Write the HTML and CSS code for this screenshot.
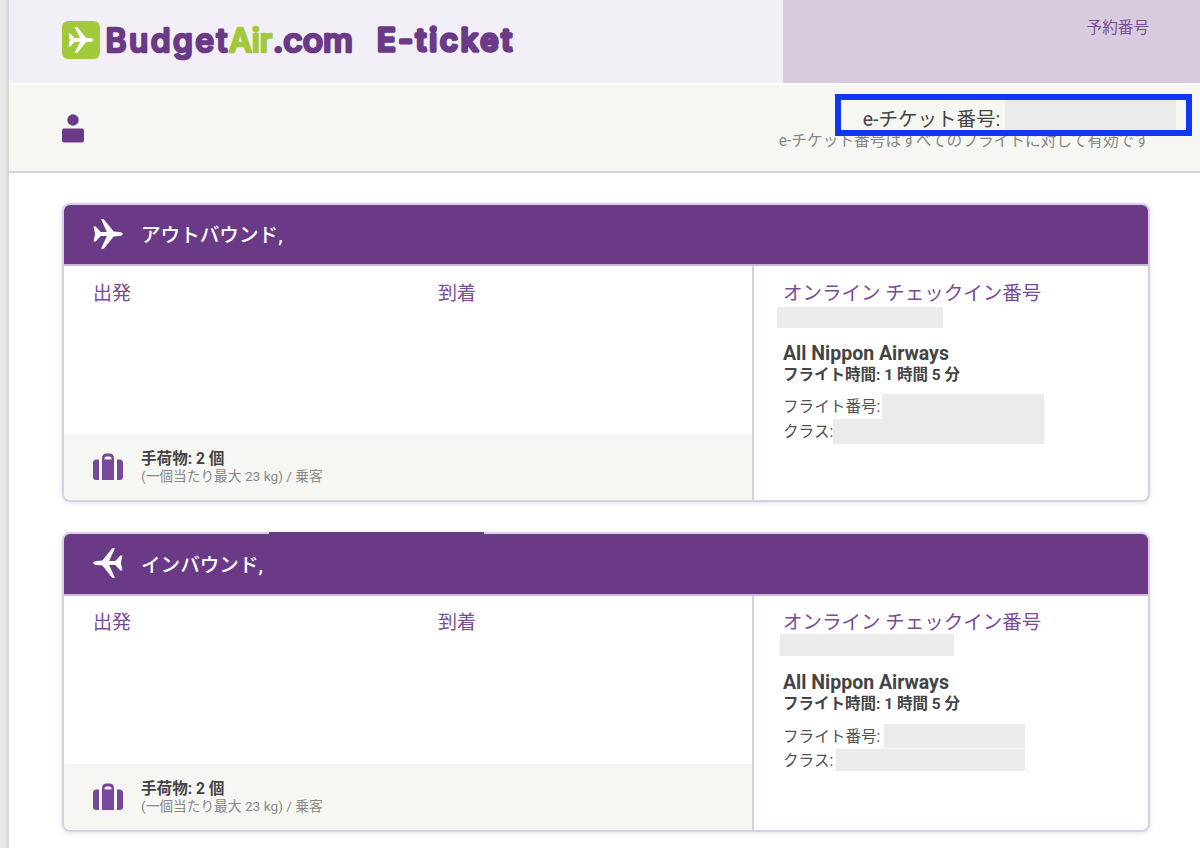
FILE: index.html
```
<!DOCTYPE html>
<html lang="ja">

<head>
    <meta charset="utf-8" />
    <meta name="viewport" content="width=device-width, initial-scale=1.0" />
    <title>BudgetAir.com E-ticket</title>
    <link rel="stylesheet" href="styles.css">
</head>

<body>
    <!-- Shared icons -->
    <svg class="icon-defs" width="0" height="0">
        <symbol id="icon-plane" viewBox="0 0 30 30">
            <path d="M.5 7.5h2.1l5.2 5.4h6.1L8 .3h2.8l9.9 12.2 5.8.5c2 .3 3.2 1.1 3.2 2s-1.200 1.700-3.200 2l-5.800.5L10.800 29.700H8l5.900-12.600H7.800l-5.200 5.400H.5L2.100 15z" />
        </symbol>
        <symbol id="icon-luggage" viewBox="0 0 30 28">
            <path d="M3.500 6.500H6V27H3.500Q0 27 0 24V10Q0 6.500 3.500 6.500zM24 6.500h2.500q3.500 0 3.500 3.500v14q0 3-3.500 3H24z" />
            <path fill-rule="evenodd" d="M9 27V5.500Q9 .5 13.500 .5h3q4.500 0 4.500 5V27zM11.500 6.500h7V5.500q0-2-2-2h-3q-2 0-2 2z" />
        </symbol>
    </svg>

    <div class="page">
        <header class="header">
            <div class="brand">
                <svg class="logo-mark" viewBox="0 0 38 38">
                    <rect width="38" height="38" rx="6" fill="#a1c93b" />
                    <use href="#icon-plane" x="6" y="6" width="26" height="26" fill="#fff" />
                </svg>
                <svg class="wordmark" viewBox="0 0 410 60">
                    <text x="1.500" y="39" textLength="122" class="logo-text">Budget</text>
                    <text x="125" y="39" textLength="43" class="logo-text green">Air</text>
                    <text x="169" y="39" textLength="80" lengthAdjust="spacingAndGlyphs" class="logo-text">.com</text>
                    <text x="273" y="38" textLength="135" class="logo-text heavy">E-ticket</text>
                </svg>
            </div>
            <div class="booking">予約番号</div>
        </header>

        <section class="passenger">
            <svg class="person" viewBox="0 0 22 29">
                <circle cx="11" cy="6" r="5.700" />
                <rect y="14.500" width="22" height="14" rx="2" />
            </svg>
            <div class="ticket">
                <div class="ticket-number">e-チケット番号:</div>
                <div class="ticket-note">e-チケット番号はすべてのフライトに対して有効です</div>
                <div class="highlight"><span class="ticket-mask"></span></div>
            </div>
        </section>

        <main class="flights">
            <article class="card">
                <h2 class="card-title">
                    <svg class="plane"><use href="#icon-plane" /></svg>
                    アウトバウンド,
                </h2>
                <div class="card-body">
                    <div class="route">
                        <div class="stops">
                            <div>出発</div>
                            <div>到着</div>
                        </div>
                        <div class="baggage">
                            <svg class="luggage"><use href="#icon-luggage" /></svg>
                            <div>
                                <div class="bag-count">手荷物: 2 個</div>
                                <div class="bag-note">(一個当たり最大 23 kg) / 乗客</div>
                            </div>
                        </div>
                    </div>
                    <div class="details">
                        <div class="checkin">オンライン チェックイン番号</div>
                        <div class="mask mask-checkin"></div>
                        <div class="airline">All Nippon Airways</div>
                        <div class="duration">フライト時間: 1 時間 5 分</div>
                        <div class="row">フライト番号:<span class="mask mask-flight"></span></div>
                        <div class="row">クラス:<span class="mask mask-class"></span></div>
                    </div>
                </div>
            </article>

            <article class="card inbound">
                <h2 class="card-title">
                    <svg class="plane"><use href="#icon-plane" /></svg>
                    インバウンド,
                </h2>
                <div class="card-body">
                    <div class="route">
                        <div class="stops">
                            <div>出発</div>
                            <div>到着</div>
                        </div>
                        <div class="baggage">
                            <svg class="luggage"><use href="#icon-luggage" /></svg>
                            <div>
                                <div class="bag-count">手荷物: 2 個</div>
                                <div class="bag-note">(一個当たり最大 23 kg) / 乗客</div>
                            </div>
                        </div>
                    </div>
                    <div class="details">
                        <div class="checkin">オンライン チェックイン番号</div>
                        <div class="mask mask-checkin"></div>
                        <div class="airline">All Nippon Airways</div>
                        <div class="duration">フライト時間: 1 時間 5 分</div>
                        <div class="row">フライト番号:<span class="mask mask-flight"></span></div>
                        <div class="row">クラス:<span class="mask mask-class"></span></div>
                    </div>
                </div>
            </article>
        </main>
    </div>
</body>

</html>
```

FILE: styles.css
```
* {
    box-sizing: border-box;
}

body {
    margin: 0;
    padding-left: 9px;
    height: 848px;
    overflow: hidden;
    background: linear-gradient(to right, #e9e9e9 0, #e6e6e6 5px, #d4d4d4 9px);
    font-family: Roboto, "Noto Sans CJK JP", sans-serif;
    font-size: 15.6px;
    color: #444;
}

.icon-defs {
    position: absolute;
}

.page {
    height: 848px;
    background: #fff;
}

/* Header */
.header {
    display: flex;
    height: 83px;
    background: #f2eff7;
}

.brand {
    display: flex;
    width: 774px;
    padding: 21px 0 0 53px;
}

.logo-mark {
    width: 38px;
    height: 38px;
}

.wordmark {
    width: 410px;
    height: 60px;
    margin: -8px 0 0 4px;
}

.logo-text {
    font-family: Inter, "Open Sans", sans-serif;
    font-size: 32px;
    font-weight: 500;
    fill: #6b3a87;
    stroke: #6b3a87;
    stroke-width: 2.6px;
    stroke-linejoin: round;
}

.logo-text.green {
    fill: #a1c93b;
    stroke: #a1c93b;
}

.logo-text.heavy {
    font-size: 31px;
    stroke-width: 3.4px;
}

.booking {
    flex: 1;
    padding: 17px 51px 0 0;
    background: #d8cbde;
    color: #7a4b99;
    line-height: 22px;
    text-align: right;
}

/* Passenger bar */
.passenger {
    display: flex;
    justify-content: space-between;
    height: 90px;
    padding: 31px 50px 0 53px;
    border-top: 2px solid #fff;
    border-bottom: 2px solid #d9cfe1;
    background: #f6f7f2;
}

.person {
    width: 22px;
    height: 29px;
    margin-top: -2px;
    fill: #6b3a87;
}

.ticket {
    position: relative;
    margin-top: -10px;
}

.ticket-number {
    padding-left: 84px;
    font-size: 19.5px;
    line-height: 28px;
}

.ticket-note {
    margin-top: -1px;
    color: #888;
    font-size: 15.7px;
    line-height: 16px;
}

.highlight {
    position: absolute;
    top: -12px;
    right: -42px;
    width: 357px;
    height: 42px;
    border: 6px solid #0f37f7;
}

.ticket-mask {
    display: block;
    width: 171px;
    height: 30px;
    margin-left: 164px;
    background: #ebebeb;
}

/* Flight cards */
.flights {
    display: flex;
    flex-direction: column;
    gap: 30.5px;
    padding: 29.5px 50px 0 53px;
}

.card {
    height: 299px;
    border: 2px solid #d9cfe4;
    border-radius: 8px;
    box-shadow: 0 1px 5px rgba(0, 0, 0, 0.12);
}

.card-title {
    display: flex;
    align-items: center;
    gap: 18px;
    height: 61px;
    margin: 0;
    padding: 0 0 1px 29px;
    border-bottom: 2px solid #c9b7d6;
    border-radius: 6px 6px 0 0;
    background: #6b3a87;
    color: #fff;
    font-size: 19.6px;
    font-weight: 500;
}

.plane {
    width: 30px;
    height: 30px;
    fill: #fff;
}

.card-body {
    display: flex;
    height: 234px;
}

.route {
    display: flex;
    flex-direction: column;
    justify-content: space-between;
    width: 690px;
    border-right: 2px solid #d9cfe4;
}

.stops {
    display: grid;
    grid-template-columns: 345px 1fr;
    padding: 14px 0 0 29px;
    color: #7a4b99;
    font-size: 19px;
    line-height: 28px;
}

.baggage {
    display: flex;
    gap: 18px;
    height: 66px;
    padding: 15px 0 0 29px;
    border-radius: 0 0 0 6px;
    background: #f6f7f2;
}

.luggage {
    width: 30px;
    height: 28px;
    margin-top: 4px;
    fill: #75489a;
}

.bag-count {
    font-weight: 700;
    line-height: 20px;
}

.bag-note {
    color: #888;
    font-size: 13.7px;
    line-height: 15px;
}

.details {
    padding: 14px 0 0 29px;
}

.checkin {
    color: #7a4b99;
    font-size: 19.5px;
    line-height: 28px;
}

.mask {
    background: #ebebeb;
}

.mask-checkin {
    width: 166px;
    height: 21px;
    margin: -1px 0 14px -6px;
}

.airline {
    font-size: 19.5px;
    font-weight: 700;
    line-height: 24px;
}

.duration {
    margin-top: -1px;
    margin-bottom: 9px;
    font-size: 15.5px;
    font-weight: 700;
    line-height: 20px;
}

.row {
    display: flex;
    height: 25px;
    color: #505050;
    line-height: 26px;
}

.mask-flight {
    width: 162px;
    margin-left: 2px;
}

.mask-class {
    width: 211px;
}

/* The inbound card has slightly different sizes */
.inbound {
    height: 300px;
}

.inbound::before {
    content: "";
    display: block;
    width: 215px;
    height: 2px;
    margin: -2px 0 0 205px;
    background: #6b3a87;
}

.inbound .card-title {
    height: 62px;
    padding-bottom: 2px;
}

.inbound .plane {
    transform: scaleX(-1);
}

.inbound .stops,
.inbound .details {
    padding-top: 13px;
}

.inbound .mask-checkin {
    width: 174px;
    height: 22px;
    margin: -3px 0 15px -3px;
}

.inbound .duration {
    margin-bottom: 10px;
}

.inbound .row {
    height: 24px;
}

.inbound .mask-flight {
    width: 141px;
    margin-left: 4px;
}

.inbound .mask-class {
    width: 189px;
    height: 22px;
    margin: 1px 0 0 3px;
}
```
